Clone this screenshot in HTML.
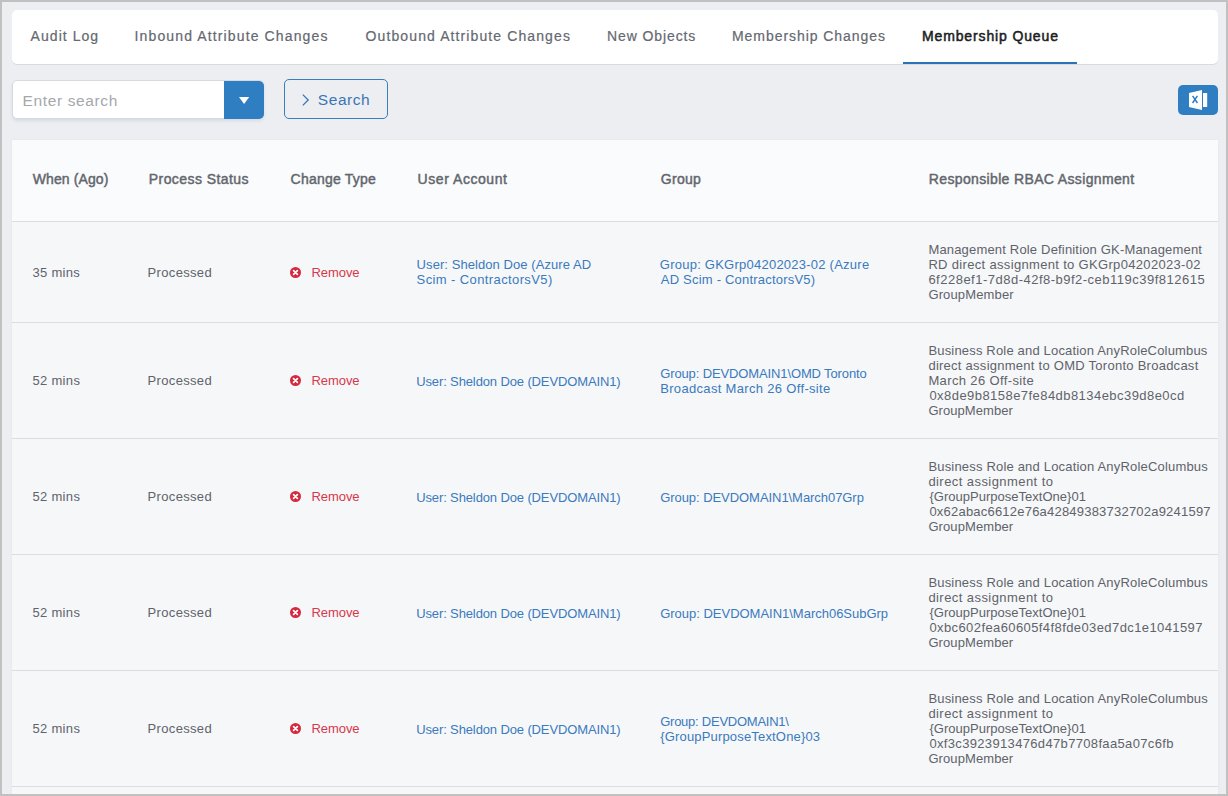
<!DOCTYPE html>
<html>
<head>
<meta charset="utf-8">
<style>
*{box-sizing:border-box;margin:0;padding:0}
html,body{width:1228px;height:796px;overflow:hidden}
body{background:#c1c1c1;font-family:"Liberation Sans",sans-serif;position:relative}
#frame{position:absolute;left:2px;top:2px;width:1224px;height:792px;background:#edeef2;overflow:hidden}
#tabs{position:absolute;left:10px;top:8px;width:1206px;height:54px;background:#fff;border-radius:5px;box-shadow:0 1px 0 #d9dbdf}
.tab{position:absolute;top:-1px;height:54px;line-height:54px;font-size:14px;color:#646870;-webkit-text-stroke:0.2px #646870;white-space:nowrap}
.tab.active{color:#1b1d21;-webkit-text-stroke:0.5px #1b1d21}
#uline{position:absolute;left:891px;top:52px;width:174px;height:2px;background:#2a73b9}
#search{position:absolute;left:10px;top:78px;width:252px;height:39px;border:1px solid #d6d9de;border-radius:5px;background:#fff;box-shadow:0 2px 3px rgba(60,90,140,.12)}
#search .ph{position:absolute;left:10px;top:1px;line-height:37px;font-size:15.5px;color:#a4a8ad;white-space:nowrap}
#dd{position:absolute;left:211px;top:0;width:40px;height:38px;background:#2f7ec2;border-radius:0 5px 5px 0}
#sbtn{position:absolute;left:282px;top:77px;width:104px;height:40px;border:1px solid #3a7ebf;border-radius:5px}
#sbtn .t{position:absolute;left:33px;top:1px;line-height:38px;font-size:15.5px;color:#3a75b5;white-space:nowrap}
#xls{position:absolute;left:1176px;top:83px;width:40px;height:30px;background:#2f7ec2;border-radius:5px}
#table{position:absolute;left:10px;top:138px;width:1206px;height:660px;background:#f6f7f9;box-shadow:0 0 2px rgba(0,0,0,.06)}
#thead{position:absolute;left:0;top:0;width:1206px;height:82px;background:#fafbfc;border-bottom:1px solid #dcdde0}
.th{position:absolute;top:-1px;height:80px;line-height:80px;font-size:14px;font-weight:normal;-webkit-text-stroke:0.45px #62666d;color:#62666d;white-space:nowrap}
.row{position:absolute;left:0;width:1206px;border-bottom:1px solid #dcdde0}
.cell{position:absolute;top:0;height:100%;display:flex;align-items:center;font-size:13px;line-height:15px;color:#5f636a;white-space:nowrap}
.link{color:#3a7abd}
.red{color:#d5394a}
.ic{position:absolute}
</style>
</head>
<body>
<div id="frame">
  <div id="tabs">
    <div class="tab" style="left:18px"><span id="t_audit" style="letter-spacing:1.046px;position:relative;left:0.60px;">Audit Log</span></div><div class="tab" style="left:123px"><span id="t_in" style="letter-spacing:1.125px;position:relative;left:-0.40px;">Inbound Attribute Changes</span></div><div class="tab" style="left:353px"><span id="t_out" style="letter-spacing:1.104px;position:relative;left:0.60px;">Outbound Attribute Changes</span></div><div class="tab" style="left:595px"><span id="t_new" style="letter-spacing:0.900px;">New Objects</span></div><div class="tab" style="left:720px"><span id="t_mc" style="letter-spacing:0.941px;">Membership Changes</span></div><div class="tab active" style="left:909px"><span id="t_mq" style="letter-spacing:0.867px;position:relative;left:1.00px;">Membership Queue</span></div>
    <div id="uline"></div>
  </div>
  <div id="search">
    <div class="ph"><span id="ph" style="letter-spacing:0.617px;position:relative;left:-0.40px;">Enter search</span></div>
    <div id="dd">
      <svg width="40" height="38" viewBox="0 0 40 38" style="position:absolute;left:0;top:0"><path d="M15 16 L25.2 16 L20.1 23 Z" fill="#fff"/></svg>
    </div>
  </div>
  <div id="sbtn">
    <svg width="20" height="38" viewBox="0 0 20 38" style="position:absolute;left:13px;top:0"><path d="M4.8 14.6 L10.2 20 L4.8 25.4" fill="none" stroke="#3a75b5" stroke-width="1.3"/></svg>
    <div class="t"><span id="sb" style="letter-spacing:0.560px;position:relative;left:-0.20px;">Search</span></div>
  </div>
  <div id="xls">
    <svg width="40" height="30" viewBox="0 0 40 30" style="position:absolute;left:0;top:0">
      <path d="M11 8 L24 5 L24 25 L11 22 Z" fill="#fff"/>
      <rect x="25" y="8" width="4.2" height="14" fill="#fff"/>
      <path d="M14.6 10.8 L19.4 18 M19.4 10.8 L14.6 18" stroke="#2f7ec2" stroke-width="1.5"/>
    </svg>
  </div>
  <div id="table">
    <div id="thead">
      <div class="th" style="left:20px"><span id="h_when" style="letter-spacing:0.090px;position:relative;left:0.80px;">When (Ago)</span></div><div class="th" style="left:136px"><span id="h_ps" style="letter-spacing:0.430px;position:relative;left:0.80px;">Process Status</span></div><div class="th" style="left:278px"><span id="h_ct" style="letter-spacing:0.220px;position:relative;left:0.60px;">Change Type</span></div><div class="th" style="left:405px"><span id="h_ua" style="letter-spacing:0.545px;position:relative;left:0.60px;">User Account</span></div><div class="th" style="left:648px"><span id="h_gr" style="letter-spacing:0.300px;position:relative;left:0.80px;">Group</span></div><div class="th" style="left:916px"><span id="h_rb" style="letter-spacing:0.355px;position:relative;left:0.80px;">Responsible RBAC Assignment</span></div>
    </div>
    <div class="row" style="top:82px;height:101px">
<div class="cell" style="left:20px"><span id="r0_when" style="letter-spacing:0.266px;position:relative;left:0.60px;">35 mins</span></div>
<div class="cell" style="left:136px"><span id="r0_ps" style="letter-spacing:0.325px;position:relative;left:-0.40px;">Processed</span></div>
<svg class="ic" style="left:278px;top:44.5px" width="11" height="11" viewBox="0 0 11 11"><circle cx="5.5" cy="5.5" r="5.5" fill="#d6293e"/><path d="M3.6 3.6L7.4 7.4M7.4 3.6L3.6 7.4" stroke="#fff" stroke-width="1.7" stroke-linecap="round"/></svg>
<div class="cell red" style="left:299px"><span id="r0_rm" style="letter-spacing:-0.040px;position:relative;left:0.40px;">Remove</span></div>
<div class="cell link" style="left:405px;"><div><div><span id="r0_ua_0" style="letter-spacing:0.071px;position:relative;left:-0.40px;">User: Sheldon Doe (Azure AD</span></div><div><span id="r0_ua_1" style="letter-spacing:0.390px;position:relative;left:-0.40px;">Scim - ContractorsV5)</span></div></div></div>
<div class="cell link" style="left:648px;"><div><div><span id="r0_gr_0" style="letter-spacing:0.240px;position:relative;left:-0.20px;">Group: GKGrp04202023-02 (Azure</span></div><div><span id="r0_gr_1" style="letter-spacing:0.208px;position:relative;left:0.80px;">AD Scim - ContractorsV5)</span></div></div></div>
<div class="cell" style="left:916px"><div><div><span id="r0_rb_0" style="letter-spacing:0.177px;position:relative;left:0.40px;">Management Role Definition GK-Management</span></div><div><span id="r0_rb_1" style="letter-spacing:0.327px;position:relative;left:0.40px;">RD direct assignment to GKGrp04202023-02</span></div><div><span id="r0_rb_2" style="letter-spacing:0.491px;position:relative;left:0.40px;">6f228ef1-7d8d-42f8-b9f2-ceb119c39f812615</span></div><div><span id="r0_rb_3" style="letter-spacing:0.140px;position:relative;left:0.40px;">GroupMember</span></div></div></div>
</div>
<div class="row" style="top:183px;height:116px">
<div class="cell" style="left:20px"><span id="r1_when" style="letter-spacing:0.333px;position:relative;left:0.40px;">52 mins</span></div>
<div class="cell" style="left:136px"><span id="r1_ps" style="letter-spacing:0.325px;position:relative;left:-0.40px;">Processed</span></div>
<svg class="ic" style="left:278px;top:52.0px" width="11" height="11" viewBox="0 0 11 11"><circle cx="5.5" cy="5.5" r="5.5" fill="#d6293e"/><path d="M3.6 3.6L7.4 7.4M7.4 3.6L3.6 7.4" stroke="#fff" stroke-width="1.7" stroke-linecap="round"/></svg>
<div class="cell red" style="left:299px"><span id="r1_rm" style="letter-spacing:-0.040px;position:relative;left:0.40px;">Remove</span></div>
<div class="cell link" style="left:405px;top:1px"><div><div><span id="r1_ua_0" style="letter-spacing:-0.126px;position:relative;left:-0.80px;">User: Sheldon Doe (DEVDOMAIN1)</span></div></div></div>
<div class="cell link" style="left:648px;"><div><div><span id="r1_gr_0" style="letter-spacing:-0.123px;position:relative;left:0.20px;">Group: DEVDOMAIN1\OMD Toronto</span></div><div><span id="r1_gr_1" style="letter-spacing:0.325px;position:relative;left:0.20px;">Broadcast March 26 Off-site</span></div></div></div>
<div class="cell" style="left:916px"><div><div><span id="r1_rb_0" style="letter-spacing:0.177px;position:relative;left:0.40px;">Business Role and Location AnyRoleColumbus</span></div><div><span id="r1_rb_1" style="letter-spacing:0.261px;position:relative;left:0.40px;">direct assignment to OMD Toronto Broadcast</span></div><div><span id="r1_rb_2" style="letter-spacing:0.366px;position:relative;left:0.40px;">March 26 Off-site</span></div><div><span id="r1_rb_3" style="letter-spacing:0.449px;position:relative;left:1.40px;">0x8de9b8158e7fe84db8134ebc39d8e0cd</span></div><div><span id="r1_rb_4" style="letter-spacing:0.060px;position:relative;left:0.40px;">GroupMember</span></div></div></div>
</div>
<div class="row" style="top:299px;height:116px">
<div class="cell" style="left:20px"><span id="r2_when" style="letter-spacing:0.333px;position:relative;left:0.40px;">52 mins</span></div>
<div class="cell" style="left:136px"><span id="r2_ps" style="letter-spacing:0.325px;position:relative;left:-0.40px;">Processed</span></div>
<svg class="ic" style="left:278px;top:52.0px" width="11" height="11" viewBox="0 0 11 11"><circle cx="5.5" cy="5.5" r="5.5" fill="#d6293e"/><path d="M3.6 3.6L7.4 7.4M7.4 3.6L3.6 7.4" stroke="#fff" stroke-width="1.7" stroke-linecap="round"/></svg>
<div class="cell red" style="left:299px"><span id="r2_rm" style="letter-spacing:-0.040px;position:relative;left:0.40px;">Remove</span></div>
<div class="cell link" style="left:405px;top:1px"><div><div><span id="r2_ua_0" style="letter-spacing:-0.126px;position:relative;left:-0.80px;">User: Sheldon Doe (DEVDOMAIN1)</span></div></div></div>
<div class="cell link" style="left:648px;top:1px"><div><div><span id="r2_gr_0" style="letter-spacing:-0.055px;position:relative;left:0.20px;">Group: DEVDOMAIN1\March07Grp</span></div></div></div>
<div class="cell" style="left:916px"><div><div><span id="r2_rb_0" style="letter-spacing:0.186px;position:relative;left:0.40px;">Business Role and Location AnyRoleColumbus</span></div><div><span id="r2_rb_1" style="letter-spacing:0.432px;position:relative;left:0.40px;">direct assignment to</span></div><div><span id="r2_rb_2" style="letter-spacing:0.019px;position:relative;left:1.40px;">{GroupPurposeTextOne}01</span></div><div><span id="r2_rb_3" style="letter-spacing:0.213px;position:relative;left:1.40px;">0x62abac6612e76a42849383732702a9241597</span></div><div><span id="r2_rb_4" style="letter-spacing:0.100px;position:relative;left:0.40px;">GroupMember</span></div></div></div>
</div>
<div class="row" style="top:415px;height:116px">
<div class="cell" style="left:20px"><span id="r3_when" style="letter-spacing:0.333px;position:relative;left:0.40px;">52 mins</span></div>
<div class="cell" style="left:136px"><span id="r3_ps" style="letter-spacing:0.325px;position:relative;left:-0.40px;">Processed</span></div>
<svg class="ic" style="left:278px;top:52.0px" width="11" height="11" viewBox="0 0 11 11"><circle cx="5.5" cy="5.5" r="5.5" fill="#d6293e"/><path d="M3.6 3.6L7.4 7.4M7.4 3.6L3.6 7.4" stroke="#fff" stroke-width="1.7" stroke-linecap="round"/></svg>
<div class="cell red" style="left:299px"><span id="r3_rm" style="letter-spacing:-0.040px;position:relative;left:0.40px;">Remove</span></div>
<div class="cell link" style="left:405px;top:1px"><div><div><span id="r3_ua_0" style="letter-spacing:-0.126px;position:relative;left:-0.80px;">User: Sheldon Doe (DEVDOMAIN1)</span></div></div></div>
<div class="cell link" style="left:648px;top:1px"><div><div><span id="r3_gr_0" style="letter-spacing:-0.014px;position:relative;left:0.20px;">Group: DEVDOMAIN1\March06SubGrp</span></div></div></div>
<div class="cell" style="left:916px"><div><div><span id="r3_rb_0" style="letter-spacing:0.186px;position:relative;left:0.40px;">Business Role and Location AnyRoleColumbus</span></div><div><span id="r3_rb_1" style="letter-spacing:0.432px;position:relative;left:0.40px;">direct assignment to</span></div><div><span id="r3_rb_2" style="letter-spacing:0.019px;position:relative;left:1.40px;">{GroupPurposeTextOne}01</span></div><div><span id="r3_rb_3" style="letter-spacing:0.406px;position:relative;left:1.40px;">0xbc602fea60605f4f8fde03ed7dc1e1041597</span></div><div><span id="r3_rb_4" style="letter-spacing:0.100px;position:relative;left:0.40px;">GroupMember</span></div></div></div>
</div>
<div class="row" style="top:531px;height:116px">
<div class="cell" style="left:20px"><span id="r4_when" style="letter-spacing:0.333px;position:relative;left:0.40px;">52 mins</span></div>
<div class="cell" style="left:136px"><span id="r4_ps" style="letter-spacing:0.325px;position:relative;left:-0.40px;">Processed</span></div>
<svg class="ic" style="left:278px;top:52.0px" width="11" height="11" viewBox="0 0 11 11"><circle cx="5.5" cy="5.5" r="5.5" fill="#d6293e"/><path d="M3.6 3.6L7.4 7.4M7.4 3.6L3.6 7.4" stroke="#fff" stroke-width="1.7" stroke-linecap="round"/></svg>
<div class="cell red" style="left:299px"><span id="r4_rm" style="letter-spacing:-0.040px;position:relative;left:0.40px;">Remove</span></div>
<div class="cell link" style="left:405px;top:1px"><div><div><span id="r4_ua_0" style="letter-spacing:-0.126px;position:relative;left:-0.80px;">User: Sheldon Doe (DEVDOMAIN1)</span></div></div></div>
<div class="cell link" style="left:648px;"><div><div><span id="r4_gr_0" style="letter-spacing:-0.246px;position:relative;left:0.20px;">Group: DEVDOMAIN1\</span></div><div><span id="r4_gr_1" style="letter-spacing:0.173px;position:relative;left:0.20px;">{GroupPurposeTextOne}03</span></div></div></div>
<div class="cell" style="left:916px"><div><div><span id="r4_rb_0" style="letter-spacing:0.186px;position:relative;left:0.40px;">Business Role and Location AnyRoleColumbus</span></div><div><span id="r4_rb_1" style="letter-spacing:0.432px;position:relative;left:0.40px;">direct assignment to</span></div><div><span id="r4_rb_2" style="letter-spacing:0.019px;position:relative;left:1.40px;">{GroupPurposeTextOne}01</span></div><div><span id="r4_rb_3" style="letter-spacing:0.340px;position:relative;left:1.40px;">0xf3c3923913476d47b7708faa5a07c6fb</span></div><div><span id="r4_rb_4" style="letter-spacing:0.100px;position:relative;left:0.40px;">GroupMember</span></div></div></div>
</div>

  </div>
</div>
</body>
</html>
